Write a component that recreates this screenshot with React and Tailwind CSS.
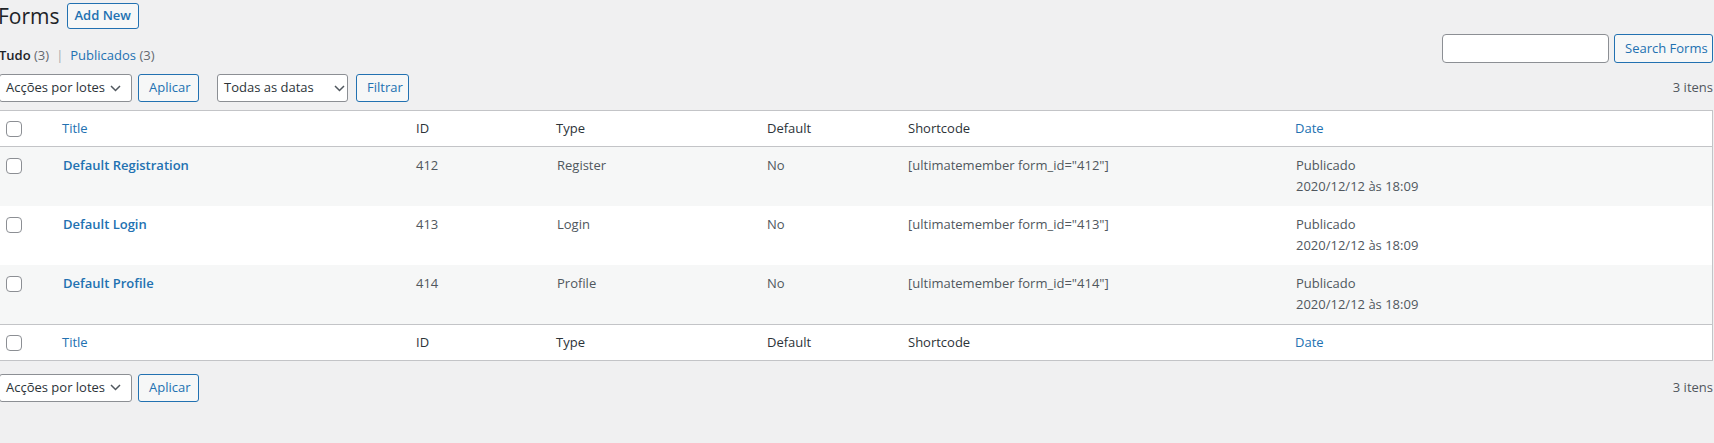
import React from "react";

const font = { fontFamily: '"Open Sans", "Noto Sans", Arial, sans-serif' };

const cols = "grid grid-cols-[62px_354px_140px_211px_141px_387px_1fr]";

const forms = [
  { title: "Default Registration", id: 412, type: "Register" },
  { title: "Default Login", id: 413, type: "Login" },
  { title: "Default Profile", id: 414, type: "Profile" },
];

function Chevron() {
  return (
    <svg width="11" height="7" viewBox="0 0 11 7" fill="none" className="shrink-0">
      <path d="M1 1l4.5 4.5L10 1" stroke="#50575e" strokeWidth="1.5" />
    </svg>
  );
}

function Select({ label, width, gap }) {
  return (
    <div
      className={`flex items-center h-[28px] bg-white border border-[#8c8f94] rounded-[3px] pl-[6px] text-[#2c3338] ${width}`}
    >
      <span className="whitespace-nowrap">{label}</span>
      <span className={gap}>
        <Chevron />
      </span>
    </div>
  );
}

function Btn({ children, className = "" }) {
  return (
    <button
      className={`h-[28px] px-[10px] whitespace-nowrap border border-[#2271b1] rounded-[3px] bg-[#f6f7f7] text-[#2271b1] ${className}`}
    >
      {children}
    </button>
  );
}

function Box() {
  return <span className="block w-[16px] h-[16px] bg-white border border-[#8c8f94] rounded-[4px]" />;
}

function HeadRow({ top }) {
  return (
    <div className={`${cols} h-[36px] items-center bg-white ${top ? "border-b" : "border-t"} border-[#c3c4c7] text-[#2c3338]`}>
      <div className="pl-[6px] flex">
        <Box />
      </div>
      <div className="text-[#2271b1]">Title</div>
      <div>ID</div>
      <div>Type</div>
      <div>Default</div>
      <div>Shortcode</div>
      <div className="text-[#2271b1]">Date</div>
    </div>
  );
}

export default function App() {
  return (
    <div className="min-h-screen bg-[#f0f0f1] text-[13px] text-[#50575e]" style={font}>
      <div className="pr-px">
        <div className="flex items-center gap-[7px] pt-[3px]">
          <h1 className="-ml-[2px] text-[21px] leading-[26px] text-[#1d2327] font-normal">Forms</h1>
          <button className="h-[26px] px-[7px] whitespace-nowrap border border-[#2271b1] rounded-[3px] bg-[#f6f7f7] text-[#2271b1] font-semibold">
            Add New
          </button>
        </div>

        <div className="flex justify-between items-start h-[29px] mt-[5px]">
          <div className="pt-[13px] leading-[16px] -ml-[1px]">
            <span className="font-semibold text-[#1d2327]">Tudo</span>{" "}
            <span className="text-[#646970]">(3)</span>
            <span className="text-[#a7aaad] mx-[7px]">|</span>
            <span className="text-[#2271b1]">Publicados</span>{" "}
            <span className="text-[#646970]">(3)</span>
          </div>
          <div className="flex gap-[5px]">
            <div className="w-[167px] h-[29px] bg-white border border-[#8c8f94] rounded-[4px]" />
            <Btn className="h-[29px] w-[99px] px-0">Search Forms</Btn>
          </div>
        </div>

        <div className="flex items-center mt-[11px] h-[28px]">
          <div className="-ml-[1px]">
            <Select label="Acções por lotes" width="w-[133px]" gap="ml-[5px]" />
          </div>
          <Btn className="ml-[6px] w-[61px] px-0">Aplicar</Btn>
          <div className="ml-[18px]">
            <Select label="Todas as datas" width="w-[131px]" gap="ml-[20px]" />
          </div>
          <Btn className="ml-[8px] w-[53px] px-0">Filtrar</Btn>
          <span className="ml-auto">3 itens</span>
        </div>

        <div className="mt-[8px] -ml-px border border-[#c3c4c7] bg-white">
          <HeadRow top />
          {forms.map((f, i) => (
            <div
              key={f.id}
              className={`${cols} h-[59px] leading-[21px] ${i % 2 === 0 ? "bg-[#f6f7f7]" : "bg-white"}`}
            >
              <div className="pl-[6px] pt-[11px]">
                <Box />
              </div>
              <div className="pt-[8px] pl-px font-semibold text-[#2271b1]">{f.title}</div>
              <div className="pt-[8px]">{f.id}</div>
              <div className="pt-[8px] pl-px">{f.type}</div>
              <div className="pt-[8px]">No</div>
              <div className="pt-[8px]">[ultimatemember form_id="{f.id}"]</div>
              <div className="pt-[8px] pl-px">
                Publicado
                <br />
                2020/12/12 às 18:09
              </div>
            </div>
          ))}
          <HeadRow />
        </div>

        <div className="flex items-center mt-[12px] h-[29px]">
          <div className="-ml-[1px]">
            <Select label="Acções por lotes" width="w-[133px]" gap="ml-[5px]" />
          </div>
          <Btn className="ml-[6px] w-[61px] px-0">Aplicar</Btn>
          <span className="ml-auto">3 itens</span>
        </div>
      </div>
    </div>
  );
}
